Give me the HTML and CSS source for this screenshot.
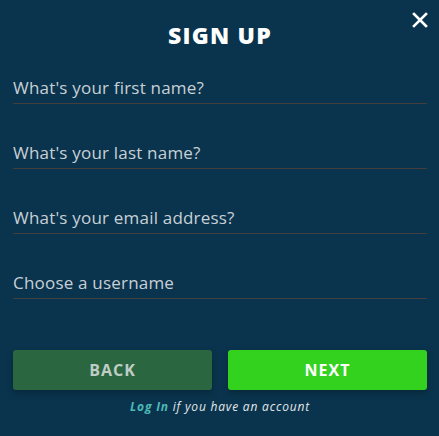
FILE: index.html
```html
<!DOCTYPE html>
<html lang="en">
<head>
  <meta charset="UTF-8" />
  <meta name="viewport" content="width=device-width, initial-scale=1.0" />
  <title>Sign Up</title>
  <link rel="stylesheet" href="styles.css">
</head>
<body>
  <div class="signup-modal">
    <button class="close-btn" aria-label="Close">
      <svg width="16" height="16" viewBox="0 0 16 16"><path d="M2 2 L14 14 M14 2 L2 14" stroke="#ffffff" stroke-width="2.6" stroke-linecap="square"/></svg>
    </button>
    <h1>SIGN UP</h1>
    <form class="signup-form">
      <input type="text" placeholder="What's your first name?" />
      <input type="text" placeholder="What's your last name?" />
      <input type="email" placeholder="What's your email address?" />
      <input type="text" placeholder="Choose a username" />
      <div class="button-row">
        <button type="button" class="btn btn-back">BACK</button>
        <button type="submit" class="btn btn-next">NEXT</button>
      </div>
    </form>
    <p class="login-note"><a href="#">Log In</a> if you have an account</p>
  </div>
</body>
</html>
```
FILE: styles.css
```css
* {
  margin: 0;
  padding: 0;
  box-sizing: border-box;
}
body, html {
  height: 100%;
  font-family: 'Open Sans', sans-serif;
  background: #0a344d;
  overflow: hidden;
}
.signup-modal {
  position: relative;
  padding: 20px 12px 0 13px;
}
.close-btn {
  position: absolute;
  top: 12px;
  right: 11px;
  background: none;
  border: none;
  cursor: pointer;
  display: flex;
}
h1 {
  font-size: 23px;
  font-weight: 800;
  color: #ffffff;
  text-align: center;
  letter-spacing: 1.2px;
  line-height: 30px;
  margin-bottom: 26px;
}
.signup-form {
  display: flex;
  flex-direction: column;
}
.signup-form input {
  background: transparent;
  border: none;
  border-bottom: 1px solid #433f3c;
  font-family: 'Open Sans', sans-serif;
  font-size: 17px;
  color: #c8d0d6;
  padding: 0 0 4px 0;
  height: 28px;
  margin-bottom: 37px;
  outline: none;
  letter-spacing: 0.2px;
}
.signup-form input::placeholder {
  color: #c8d0d6;
}
.button-row {
  display: flex;
  gap: 16px;
  margin-top: 14px;
}
.btn {
  flex: 1;
  height: 40px;
  border: none;
  border-radius: 3px;
  font-family: 'Open Sans', sans-serif;
  font-size: 16px;
  font-weight: 700;
  letter-spacing: 1px;
  cursor: pointer;
  box-shadow: 0 3px 6px rgba(0, 0, 0, 0.25);
}
.btn-back {
  background: #2a6741;
  color: #c0cdc5;
}
.btn-next {
  background: #32d21e;
  color: #ffffff;
}
.login-note {
  text-align: center;
  font-size: 12px;
  font-style: italic;
  color: #e4e8ea;
  letter-spacing: 0.8px;
  margin-top: 8px;
}
.login-note a {
  color: #4cb9b7;
  font-weight: 700;
  text-decoration: none;
}
```
